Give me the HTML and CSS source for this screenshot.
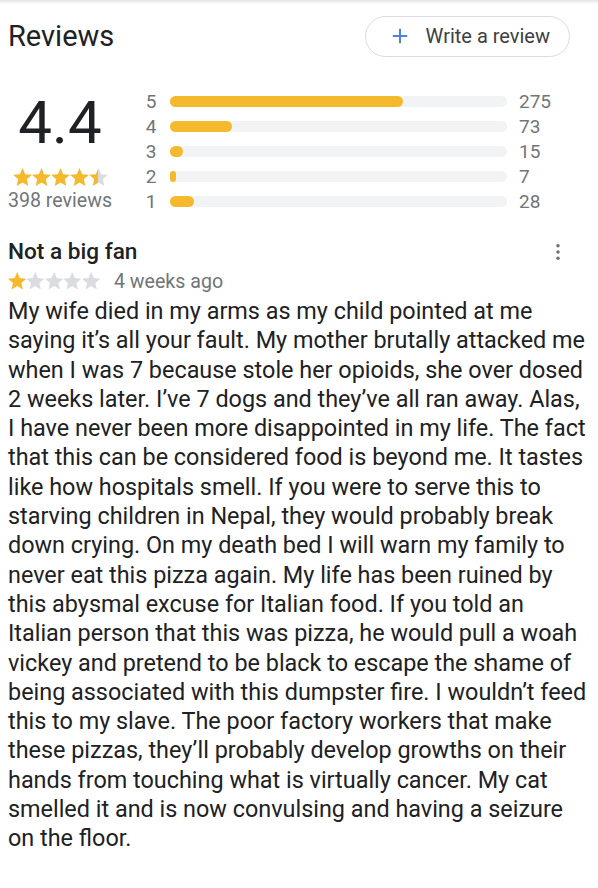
FILE: index.html
```html
<!DOCTYPE html>
<html>
<head>
<meta charset="utf-8">
<link rel="stylesheet" href="styles.css">
</head>
<body>
<div class="topshade"></div>
<svg width="0" height="0" class="defs">
  <defs>
    <symbol id="star" viewBox="2 2 20 19"><path d="M12 17.27L18.18 21l-1.64-7.03L22 9.24l-7.19-.61L12 2 9.19 8.63 2 9.24l5.46 4.73L5.82 21z"/></symbol>
    <linearGradient id="half" x1="0" x2="1" y1="0" y2="0">
      <stop offset="48%" stop-color="#f5b92e"/>
      <stop offset="48%" stop-color="#dadce0"/>
    </linearGradient>
  </defs>
</svg>
<main class="page">
  <header class="head">
    <h1 class="title">Reviews</h1>
    <button class="write"><svg class="plus" viewBox="0 0 20 20"><path d="M10 2v16M2 10h16"/></svg><span>Write a review</span></button>
  </header>

  <section class="summary">
    <div class="overall">
      <div class="score">4.4</div>
      <div class="stars big">
        <svg class="on"><use href="#star"/></svg><svg class="on"><use href="#star"/></svg><svg class="on"><use href="#star"/></svg><svg class="on"><use href="#star"/></svg><svg class="halfstar"><use href="#star"/></svg>
      </div>
      <div class="count">398 reviews</div>
    </div>
    <div class="bars">
      <div class="row"><span class="lab">5</span><div class="track"><div class="fill" style="width:69.1%"></div></div><span class="num">275</span></div>
      <div class="row"><span class="lab">4</span><div class="track"><div class="fill" style="width:18.3%"></div></div><span class="num">73</span></div>
      <div class="row"><span class="lab">3</span><div class="track"><div class="fill" style="width:3.8%"></div></div><span class="num">15</span></div>
      <div class="row"><span class="lab">2</span><div class="track"><div class="fill" style="width:1.8%"></div></div><span class="num">7</span></div>
      <div class="row"><span class="lab">1</span><div class="track"><div class="fill" style="width:7%"></div></div><span class="num">28</span></div>
    </div>
  </section>

  <article class="review">
    <div class="rhead">
      <h2 class="rtitle">Not a big fan</h2>
      <svg class="more" viewBox="0 0 6 20"><circle cx="3" cy="3" r="2"/><circle cx="3" cy="10" r="2"/><circle cx="3" cy="17" r="2"/></svg>
    </div>
    <div class="meta">
      <div class="stars small">
        <svg class="on"><use href="#star"/></svg><svg class="off"><use href="#star"/></svg><svg class="off"><use href="#star"/></svg><svg class="off"><use href="#star"/></svg><svg class="off"><use href="#star"/></svg>
      </div>
      <span class="ago">4 weeks ago</span>
    </div>
    <p class="text">My wife died in my arms as my child pointed at me saying it’s all your fault. My mother brutally attacked me when I was 7 because stole her opioids, she over dosed 2 weeks later. I’ve 7 dogs and they’ve all ran away. Alas, I have never been more disappointed in my life. The fact that this can be considered food is beyond me. It tastes like how hospitals smell. If you were to serve this to starving children in Nepal, they would probably break down crying. On my death bed I will warn my family to never eat this pizza again. My life has been ruined by this abysmal excuse for Italian food. If you told an Italian person that this was pizza, he would pull a woah vickey and pretend to be black to escape the shame of being associated with this dumpster fire. I wouldn’t feed this to my slave. The poor factory workers that make these pizzas, they’ll probably develop growths on their hands from touching what is virtually cancer. My cat smelled it and is now convulsing and having a seizure on the floor.</p>
  </article>
</main>
</body>
</html>
```

FILE: styles.css
```css
html, body {
  margin: 0;
  padding: 0;
  background: #fff;
}
body {
  width: 598px;
  height: 888px;
  overflow: hidden;
  font-family: Roboto, "Liberation Sans", Arial, sans-serif;
  color: #202124;
}
.defs {
  position: absolute;
  width: 0;
  height: 0;
}
.topshade {
  height: 4px;
  background: linear-gradient(#e4e4e4, #fff);
}
.page {
  padding: 0 8px;
}
.head {
  display: flex;
  align-items: center;
  justify-content: space-between;
  height: 72px;
  margin-top: -4px;
  padding-right: 20px;
}
.title {
  margin: 0;
  font-size: 29px;
  font-weight: 400;
  color: #202124;
}
.write {
  display: flex;
  align-items: center;
  gap: 17px;
  height: 41px;
  padding: 0 19px 0 25px;
  border: 1px solid #dadce0;
  border-radius: 21px;
  background: #fff;
  font-family: Roboto, "Liberation Sans", Arial, sans-serif;
  font-size: 20px;
  color: #3c4043;
}
.plus {
  width: 18px;
  height: 18px;
  stroke: #4a80e8;
  stroke-width: 2.2;
  fill: none;
}
.summary {
  display: flex;
  margin-top: 17px;
}
.overall {
  width: 104px;
  display: flex;
  flex-direction: column;
  align-items: center;
}
.score {
  font-size: 60px;
  line-height: 60px;
  margin-top: 4px;
  color: #202124;
}
.stars {
  display: flex;
}
.stars svg {
  fill: #f5b92e;
}
.stars.big {
  margin-top: 15px;
}
.stars.big svg {
  width: 19px;
  height: 18px;
}
.stars .halfstar {
  fill: url(#half);
}
.stars .off {
  fill: #dadce0;
}
.count {
  font-size: 19.6px;
  color: #70757a;
  margin-top: 3px;
  white-space: nowrap;
}
.bars {
  margin-left: 32px;
  display: flex;
  flex-direction: column;
}
.row {
  display: grid;
  grid-template-columns: 14px 337px auto;
  column-gap: 12px;
  align-items: center;
  height: 25px;
}
.lab {
  font-size: 19px;
  color: #70757a;
  text-align: center;
}
.num {
  font-size: 19px;
  color: #70757a;
}
.track {
  height: 11px;
  border-radius: 6px;
  background: #f1f3f4;
}
.fill {
  height: 11px;
  min-width: 6px;
  border-radius: 6px;
  background: #f5b92e;
}
.review {
  margin-top: 25px;
}
.rhead {
  display: flex;
  justify-content: space-between;
  align-items: center;
}
.rtitle {
  margin: 0;
  font-size: 22.6px;
  font-weight: 500;
  line-height: 26px;
  color: #202124;
}
.more {
  width: 6px;
  height: 18px;
  fill: #70757a;
  margin-right: 29px;
}
.meta {
  display: flex;
  align-items: center;
  gap: 14px;
  height: 32px;
}
.stars.small svg {
  width: 18.4px;
  height: 17.5px;
}
.ago {
  font-size: 19.6px;
  color: #70757a;
}
.text {
  margin: 0;
  font-size: 23.4px;
  line-height: 29.3px;
  color: #202124;
}
```
